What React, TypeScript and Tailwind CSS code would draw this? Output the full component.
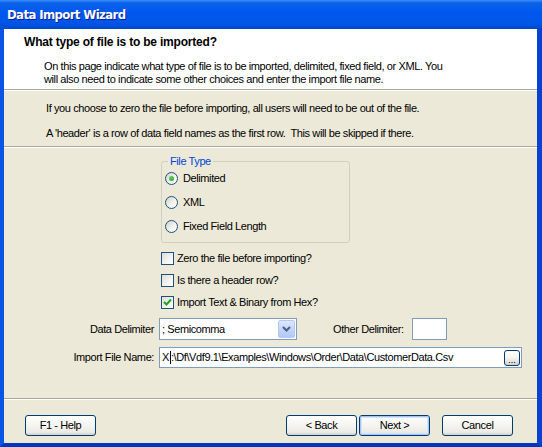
import React from "react";

function Radio({ checked, label }: { checked?: boolean; label: string }) {
  return (
    <div className="flex items-center h-[13px]">
      <span className="w-[13px] h-[13px] rounded-full border border-[#1c5180] bg-[linear-gradient(135deg,#d4d4ce_0%,#f4f4f0_60%,#ffffff_100%)] flex items-center justify-center">
        {checked && <span className="w-[5px] h-[5px] rounded-full bg-[radial-gradient(circle_at_35%_35%,#5fd35f,#21a121)]" />}
      </span>
      <span className="ml-[5px]">{label}</span>
    </div>
  );
}

function Check({ checked, label }: { checked?: boolean; label: string }) {
  return (
    <div className="flex items-center h-[13px]">
      <span className="w-[13px] h-[13px] border border-[#1c5180] bg-[linear-gradient(135deg,#dcdcd7_0%,#f4f4f0_60%,#ffffff_100%)] flex items-center justify-center">
        {checked && (
          <svg width="9" height="9" viewBox="0 0 9 9">
            <path d="M1 4 L3.5 6.5 L8 1.5" stroke="#21a121" strokeWidth="2" fill="none" />
          </svg>
        )}
      </span>
      <span className="ml-[3px]">{label}</span>
    </div>
  );
}

function XpButton({ label, focused }: { label: string; focused?: boolean }) {
  return (
    <div className="w-[71px] h-[21px] rounded-[3px] border border-[#003c74] bg-[linear-gradient(180deg,#ffffff_0%,#f4f4f0_50%,#ecebe6_85%,#d6d0c5_100%)] flex items-center justify-center">
      <div
        className={
          focused
            ? "w-full h-full rounded-[2px] border border-[#a8c4f4] shadow-[inset_0_0_0_1px_#cee7ff] flex items-center justify-center"
            : "w-full h-full flex items-center justify-center"
        }
      >
        {label}
      </div>
    </div>
  );
}

export default function App() {
  return (
    <div className="w-[542px] h-[447px] flex flex-col bg-[#0a4ee0] text-[11px] leading-[13px] tracking-[-0.4px] text-black font-['Liberation_Sans',Arial,sans-serif]">
      {/* title bar */}
      <div className="h-[29px] shrink-0 flex items-center pl-[7px] bg-[linear-gradient(180deg,#3c8ef9_0%,#0a62ea_10%,#0058ee_40%,#0055e5_80%,#0047cc_100%)]">
        <span className="text-white font-bold text-[13px] tracking-[-0.6px] font-['Liberation_Sans_Narrow','DejaVu_Sans_Condensed',sans-serif] [text-shadow:1px_1px_0_#0a1e9a]">
          Data Import Wizard
        </span>
      </div>

      <div className="flex-1 flex flex-col border-l-[4px] border-r-[5px] border-b-[4px] border-l-[#0b55e6] border-r-[#0842d0] border-b-[#0637b8] bg-[#ece9d8]">
        {/* header */}
        <div className="h-[60px] shrink-0 bg-white pt-[6px] pl-[20px]">
          <div className="font-bold text-[12px] leading-[14px] tracking-[-0.2px]">What type of file is to be imported?</div>
          <div className="pl-[20px] pt-[11px]">
            On this page indicate what type of file is to be imported, delimited, fixed field, or XML. You
            <br />
            will also need to indicate some other choices and enter the import file name.
          </div>
        </div>
        <div className="h-px bg-[#aca899]" />
        <div className="h-px bg-white" />

        {/* info */}
        <div className="h-[55px] shrink-0 pl-[42px] pt-[11px] flex flex-col gap-[12px]">
          <div>If you choose to zero the file before importing, all users will need to be out of the file.</div>
          <div>A 'header' is a row of data field names as the first row.&nbsp; This will be skipped if there.</div>
        </div>
        <div className="h-px bg-[#aca899]" />
        <div className="h-px bg-white" />

        {/* main */}
        <div className="h-[250px] shrink-0 flex flex-col">
          <div className="ml-[157px] mt-[13px] w-[189px] h-[82px] relative rounded-[3px] border border-[#d0d0bf] pl-[3px] pt-[10px] flex flex-col gap-[11px]">
            <span className="absolute -top-[7px] left-[6px] px-[2px] bg-[#ece9d8] text-[#0046d5]">File Type</span>
            <Radio checked label="Delimited" />
            <Radio label="XML" />
            <Radio label="Fixed Field Length" />
          </div>

          <div className="ml-[157px] mt-[9px] flex flex-col gap-[9px]">
            <Check label="Zero the file before importing?" />
            <Check label="Is there a header row?" />
            <Check checked label="Import Text & Binary from Hex?" />
          </div>

          <div className="mt-[9px] flex items-center h-[22px]">
            <span className="w-[150px] text-right">Data Delimiter</span>
            <div className="ml-[5px] w-[138px] h-[22px] border border-[#7f9db9] bg-white flex items-center justify-between pl-[2px] pr-px">
              <span>; Semicomma</span>
              <div className="w-[17px] h-[18px] rounded-[2px] border border-[#b5c8f2] bg-[linear-gradient(180deg,#dce8fe_0%,#c4d6fb_50%,#b2c8f6_100%)] flex items-center justify-center">
                <svg width="9" height="6" viewBox="0 0 9 6">
                  <path d="M1 1 L4.5 4.5 L8 1" stroke="#4d6185" strokeWidth="2" fill="none" />
                </svg>
              </div>
            </div>
            <span className="ml-[36px] w-[74px]">Other Delimiter:</span>
            <div className="ml-[5px] w-[35px] h-[22px] border border-[#7f9db9] bg-white" />
          </div>

          <div className="mt-[7px] flex items-center h-[21px]">
            <span className="w-[150px] text-right">Import File Name:</span>
            <div className="ml-[5px] w-[363px] h-[21px] border border-[#7f9db9] bg-white flex items-center justify-between pl-[2px] pr-px">
              <span className="flex items-center">
                X<span className="w-px h-[13px] bg-black ml-px" />:\Df\Vdf9.1\Examples\Windows\Order\Data\CustomerData.Csv
              </span>
              <div className="w-[16px] h-[16px] rounded-[3px] border border-[#003c74] bg-[linear-gradient(180deg,#ffffff_0%,#f4f4f0_50%,#d6d0c5_100%)] flex items-end justify-center text-[9px] leading-[10px] tracking-normal">
                ...
              </div>
            </div>
          </div>
        </div>
        <div className="h-px bg-[#aca899]" />
        <div className="h-px bg-white" />

        {/* footer */}
        <div className="flex-1 flex items-start pt-[15px] pl-[21px]">
          <XpButton label="F1 - Help" />
          <div className="ml-[190px] flex">
            <XpButton label="< Back" />
            <div className="ml-[2px]">
              <XpButton label="Next >" focused />
            </div>
            <div className="ml-[12px]">
              <XpButton label="Cancel" />
            </div>
          </div>
        </div>
      </div>
    </div>
  );
}
